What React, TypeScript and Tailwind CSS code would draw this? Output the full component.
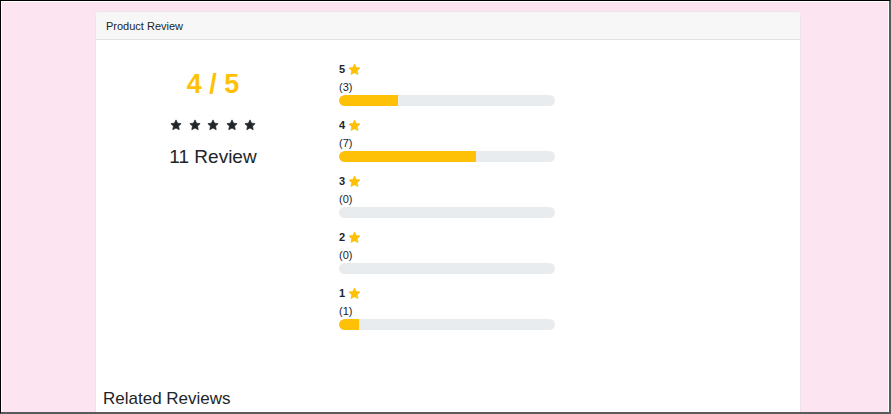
import React from "react";

const StarPath =
  "M12 1.8l3.1 6.6 7.1.9-5.2 4.9 1.4 7.1L12 17.8l-6.4 3.5 1.4-7.1-5.2-4.9 7.1-.9z";

function Star({ className }: { className: string }) {
  return (
    <svg viewBox="0 0 24 24" className={className} aria-hidden="true">
      <path d={StarPath} fill="currentColor" strokeLinejoin="round" stroke="currentColor" strokeWidth="1.5" />
    </svg>
  );
}

const rows = [
  { n: 5, c: 3 },
  { n: 4, c: 7 },
  { n: 3, c: 0 },
  { n: 2, c: 0 },
  { n: 1, c: 1 },
];

export default function App() {
  const total = 11;
  return (
    <div
      className="w-[891px] h-[414px] overflow-hidden border-t border-l border-black border-r-2 border-b-2 border-r-[#5a5a5a] border-b-[#5a5a5a] bg-white pt-px pl-px pr-px"
      style={{ fontFamily: '"Liberation Sans", Arial, sans-serif' }}
    >
      <div className="h-full bg-[#fde4f1] pl-[93px] pr-[87px] pt-[9px] overflow-hidden">
        <div className="h-[500px] bg-white border border-[#ece4e8] rounded-[4px] overflow-hidden">
          <div className="h-[28px] bg-[#f7f7f7] border-b border-[#e2e2e2] pl-[10px] text-[11px] leading-[28px] text-[#212529]">
            Product Review
          </div>
          <div className="flex">
            <div className="w-[234px] flex flex-col items-center pt-[28px]">
              <div className="text-[27px] leading-[32px] font-bold text-[#ffc107]">4 / 5</div>
              <div className="mt-[19px] flex gap-[6.5px] text-[#212529]">
                {[0, 1, 2, 3, 4].map((i) => (
                  <Star key={i} className="w-[12px] h-[12px]" />
                ))}
              </div>
              <div className="mt-[14px] text-[19px] leading-[24px] text-[#212529]">11 Review</div>
            </div>
            <div className="ml-[9px] pt-[21px] w-[216px]">
              {rows.map((r) => (
                <div key={r.n} className="mb-[11px]">
                  <div className="h-[16px] flex items-center gap-[3px] text-[11px] font-bold text-[#212529] mb-[2px]">
                    <span>{r.n}</span>
                    <Star className="w-[13px] h-[13px] text-[#ffc107]" />
                  </div>
                  <div className="h-[16px] leading-[16px] text-[11px] text-[#212529]">({r.c})</div>
                  <div className="h-[11px] rounded-[6px] bg-[#e9ecef] overflow-hidden">
                    <div
                      className="h-full bg-[#ffc107] rounded-l-[6px]"
                      style={{ width: `${(r.c / total) * 100}%` }}
                    />
                  </div>
                </div>
              ))}
            </div>
          </div>
          <div className="mt-[48px] pl-[7px] text-[17px] leading-[20px] text-[#212529]">Related Reviews</div>
        </div>
      </div>
    </div>
  );
}
